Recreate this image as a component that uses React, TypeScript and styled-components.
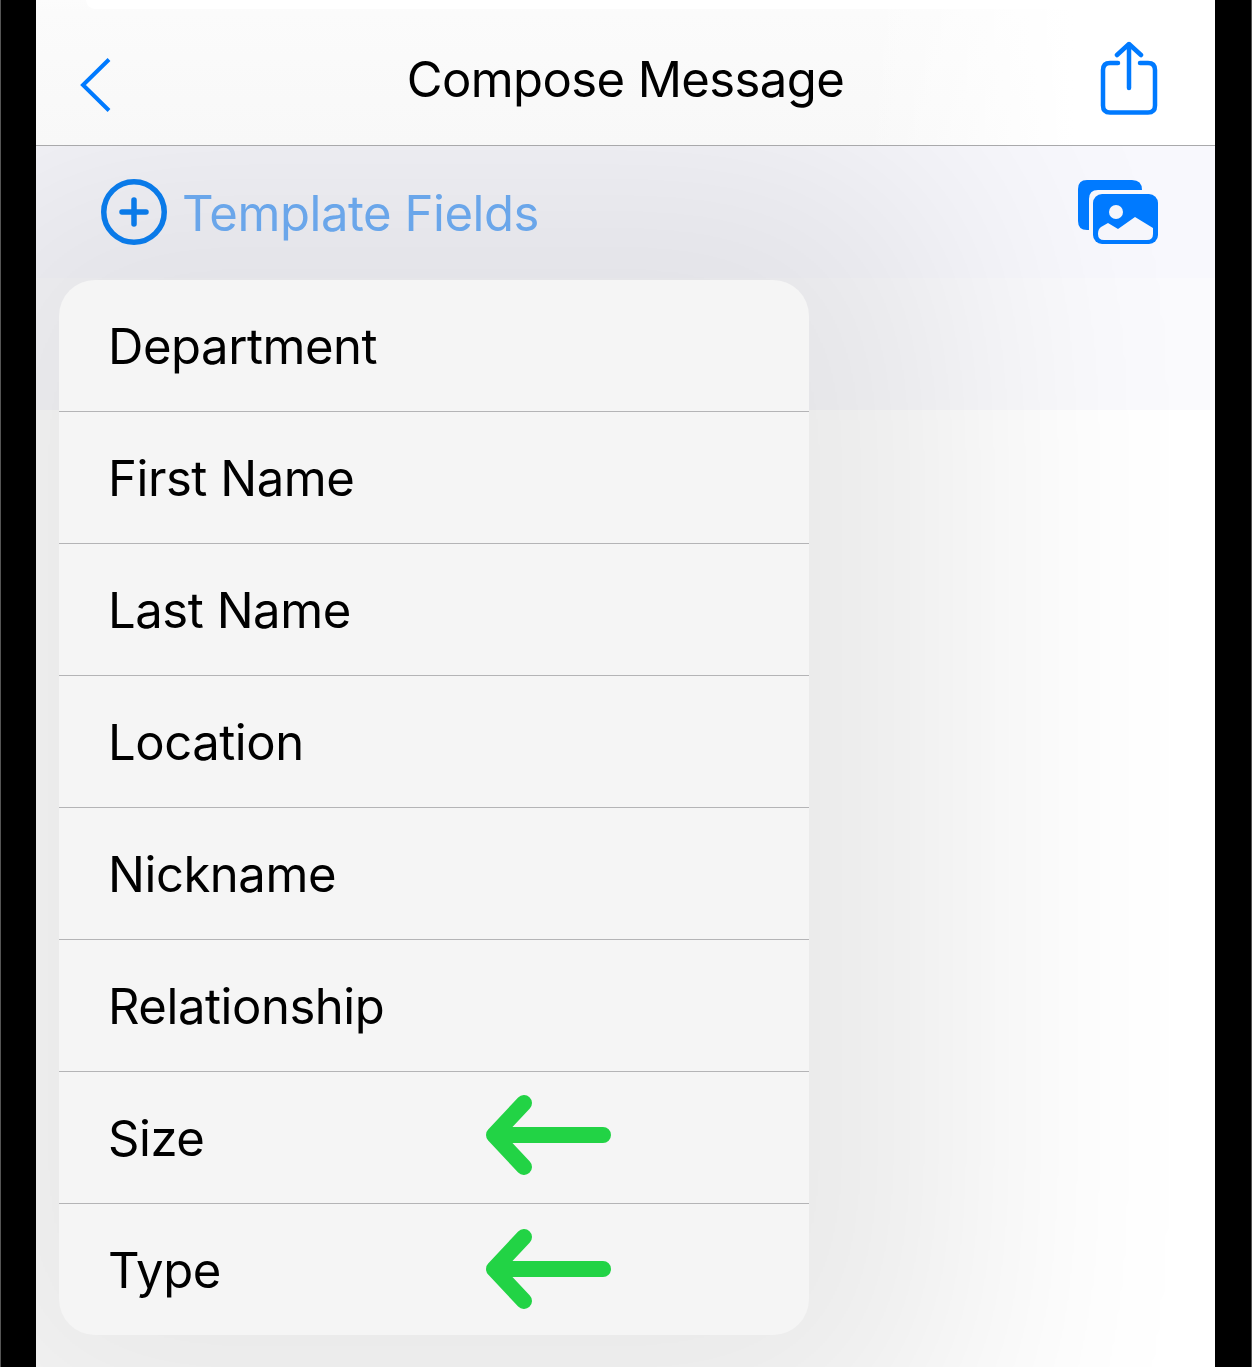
import React from 'react'
import styled, { createGlobalStyle } from 'styled-components'

const FIELDS = [
  { label: 'Department' },
  { label: 'First Name' },
  { label: 'Last Name' },
  { label: 'Location' },
  { label: 'Nickname' },
  { label: 'Relationship' },
  { label: 'Size', arrowTop: 23 },
  { label: 'Type', arrowTop: 25 },
]

const App: React.FC = () => (
  <>
    <GlobalStyle />
    <Frame>
      <Screen>
        <Header>
          <BackIcon viewBox="0 0 36 60">
            <path d="M30 4.5 L4 30 L30 55.5" />
          </BackIcon>
          <Title>Compose Message</Title>
          <ShareIcon viewBox="0 0 60 76">
            <path d="M20 22 H12 Q5 22 5 29 V64.5 Q5 71.5 12 71.5 H50 Q57 71.5 57 64.5 V29 Q57 22 50 22 H42" />
            <path d="M31 47 V3 M19 14 L31 3 L43 14" />
          </ShareIcon>
        </Header>
        <Toolbar>
          <AddField>
            <PlusIcon viewBox="0 0 66 66">
              <circle cx="33" cy="33" r="30.25" />
              <path d="M21 33 H45 M33 21 V45" />
            </PlusIcon>
            <FieldLabel>Template Fields</FieldLabel>
          </AddField>
          <PhotoIcon viewBox="0 0 80 64">
            <path d="M9 0 H54 Q64 0 64 10 V10 H20 Q11 10 11 19 V50 H9 Q0 50 0 41 V9 Q0 0 9 0 Z" fill="#007aff" />
            <rect x="15" y="14" width="65" height="50" rx="9" fill="#007aff" />
            <circle cx="38" cy="32" r="7" fill="#f6f6fb" />
            <path d="M20 54 Q20 49 23 47 L30 43 L40 49 L57 37 L75 48 V54 Q75 60 69 60 H26 Q20 60 20 54 Z" fill="#f6f6fb" />
          </PhotoIcon>
        </Toolbar>
        <ToolbarTail />
        <Body />
        <Menu>
          {FIELDS.map((field) => (
            <MenuRow key={field.label}>
              <RowLabel>{field.label}</RowLabel>
              {field.arrowTop !== undefined && (
                <GreenArrow $top={field.arrowTop} viewBox="0 0 126 80">
                  <path d="M117 40 H8 M38 8 L8 40 L38 72" />
                </GreenArrow>
              )}
            </MenuRow>
          ))}
        </Menu>
      </Screen>
    </Frame>
  </>
)

const GlobalStyle = createGlobalStyle`
  html, body {
    margin: 0;
    padding: 0;
    background: #000;
  }
  body {
    font-family: Inter, "Noto Sans", sans-serif;
  }
`

const Frame = styled.div`
  width: 1252px;
  height: 1367px;
  padding: 0 36px 0 35px;
  box-sizing: border-box;
  background: #000;
  border-left: 1px solid #555;
  border-right: 1px solid #555;
  overflow: hidden;
`

const Screen = styled.div`
  position: relative;
  height: 100%;
  display: flex;
  flex-direction: column;
  overflow: hidden;
  background: #fff;
`

const Header = styled.header`
  position: relative;
  z-index: 1;
  height: 146px;
  flex: none;
  box-sizing: border-box;
  display: grid;
  grid-template-columns: 1fr auto 1fr;
  align-items: center;
  padding: 12px 57px 0;
  background:
    linear-gradient(90deg, rgba(255, 255, 255, 0) 70%, #fff 88%),
    linear-gradient(180deg, #fcfcfc 0, #fbfbfb 12px, #f8f8f8 100%);
  border-bottom: 1px solid #a9a9ab;

  &::before {
    content: '';
    position: absolute;
    top: 0;
    left: 50px;
    right: 0;
    height: 9px;
    background: #fff;
    border-bottom-left-radius: 16px;
  }
`

const BackIcon = styled.svg`
  width: 36px;
  height: 60px;
  margin: 13px 0 0 -14px;
  fill: none;
  stroke: #007aff;
  stroke-width: 4;
`

const Title = styled.h1`
  position: relative;
  margin: 2px 0 0;
  font-size: 49px;
  font-weight: 400;
  letter-spacing: -0.6px;
  color: #000;
`

const ShareIcon = styled.svg`
  justify-self: end;
  position: relative;
  width: 60px;
  height: 76px;
  fill: none;
  stroke: #007aff;
  stroke-width: 4.5;
  stroke-linecap: round;
  stroke-linejoin: round;
`

const Toolbar = styled.div`
  height: 132px;
  flex: none;
  box-sizing: border-box;
  display: flex;
  align-items: flex-start;
  justify-content: space-between;
  padding: 33px 57.5px 0 65px;
  background: #f8f8fd;
`

const AddField = styled.div`
  position: relative;
  z-index: 1;
  display: flex;
  align-items: center;
  gap: 15px;
`

const PlusIcon = styled.svg`
  width: 66px;
  height: 66px;
  fill: none;
  stroke: #0a7ae8;
  stroke-width: 5.5;
  stroke-linecap: round;
`

const FieldLabel = styled.span`
  margin-top: 2px;
  font-size: 49px;
  color: #6aa6ea;
  letter-spacing: -0.45px;
`

const PhotoIcon = styled.svg`
  position: relative;
  z-index: 1;
  width: 80px;
  height: 64px;
  margin-top: 1px;
`

const ToolbarTail = styled.div`
  height: 132px;
  flex: none;
  background: #fafafd;
`

const Body = styled.div`
  flex: 1;
  background: #fff;
`

const Menu = styled.div`
  position: absolute;
  left: 23px;
  top: 280px;
  width: 750px;
  border-radius: 36px;
  background: #f5f5f5;
  box-shadow: 0 0 380px 150px rgba(8, 8, 0, 0.09);
`

const MenuRow = styled.div`
  position: relative;
  height: 132px;
  box-sizing: border-box;
  display: flex;
  align-items: center;
  padding: 2px 0 0 49px;
  border-bottom: 1px solid #b4b4b6;

  &:last-child {
    border-bottom: none;
    height: 131px;
  }
`

const RowLabel = styled.span`
  font-size: 49px;
  color: #000;
  letter-spacing: -0.45px;
`

const GreenArrow = styled.svg<{ $top: number }>`
  position: absolute;
  left: 427px;
  top: ${(props) => props.$top}px;
  width: 126px;
  height: 80px;
  fill: none;
  stroke: #22d345;
  stroke-width: 16;
  stroke-linecap: round;
  stroke-linejoin: round;
`

export default App
